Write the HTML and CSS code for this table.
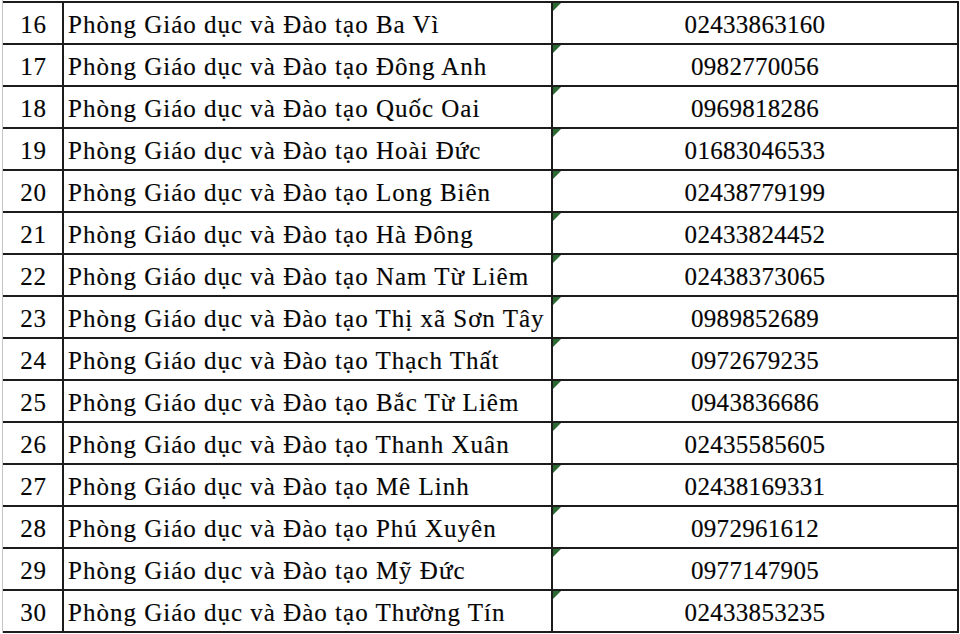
FILE: index.html
```html
<!DOCTYPE html>
<html lang="vi">
<head>
<meta charset="utf-8">
<title>Danh sách Phòng Giáo dục và Đào tạo</title>
<link rel="stylesheet" href="styles.css">
</head>
<body>
<div class="sheet">
  <div class="table">
    <div class="row"><div class="c no">16</div><div class="c name">Phòng Giáo dục và Đào tạo Ba Vì</div><div class="c tel">02433863160</div></div>
    <div class="row"><div class="c no">17</div><div class="c name">Phòng Giáo dục và Đào tạo Đông Anh</div><div class="c tel">0982770056</div></div>
    <div class="row"><div class="c no">18</div><div class="c name">Phòng Giáo dục và Đào tạo Quốc Oai</div><div class="c tel">0969818286</div></div>
    <div class="row"><div class="c no">19</div><div class="c name">Phòng Giáo dục và Đào tạo Hoài Đức</div><div class="c tel">01683046533</div></div>
    <div class="row"><div class="c no">20</div><div class="c name">Phòng Giáo dục và Đào tạo Long Biên</div><div class="c tel">02438779199</div></div>
    <div class="row"><div class="c no">21</div><div class="c name">Phòng Giáo dục và Đào tạo Hà Đông</div><div class="c tel">02433824452</div></div>
    <div class="row"><div class="c no">22</div><div class="c name">Phòng Giáo dục và Đào tạo Nam Từ Liêm</div><div class="c tel">02438373065</div></div>
    <div class="row"><div class="c no">23</div><div class="c name">Phòng Giáo dục và Đào tạo Thị xã Sơn Tây</div><div class="c tel">0989852689</div></div>
    <div class="row"><div class="c no">24</div><div class="c name">Phòng Giáo dục và Đào tạo Thạch Thất</div><div class="c tel">0972679235</div></div>
    <div class="row"><div class="c no">25</div><div class="c name">Phòng Giáo dục và Đào tạo Bắc Từ Liêm</div><div class="c tel">0943836686</div></div>
    <div class="row"><div class="c no">26</div><div class="c name">Phòng Giáo dục và Đào tạo Thanh Xuân</div><div class="c tel">02435585605</div></div>
    <div class="row"><div class="c no">27</div><div class="c name">Phòng Giáo dục và Đào tạo Mê Linh</div><div class="c tel">02438169331</div></div>
    <div class="row"><div class="c no">28</div><div class="c name">Phòng Giáo dục và Đào tạo Phú Xuyên</div><div class="c tel">0972961612</div></div>
    <div class="row"><div class="c no">29</div><div class="c name">Phòng Giáo dục và Đào tạo Mỹ Đức</div><div class="c tel">0977147905</div></div>
    <div class="row"><div class="c no">30</div><div class="c name">Phòng Giáo dục và Đào tạo Thường Tín</div><div class="c tel">02433853235</div></div>
  </div>
  <div class="grid-under"></div>
</div>
</body>
</html>
```
FILE: styles.css
```css
html, body {
  margin: 0;
  padding: 0;
  background: #ffffff;
}

body {
  width: 960px;
  height: 634px;
  overflow: hidden;
  font-family: "Liberation Serif", "Times New Roman", serif;
  color: #050505;
}

.sheet {
  margin-left: 2px;
  padding-top: 1px;
  border-left: 1px solid #c4c4c4;
  height: 633px;
  box-sizing: border-box;
}

.table {
  width: 956px;
  border-top: 2px solid #1c1c1c;
}

.row {
  display: grid;
  grid-template-columns: 61px 489px 406px;
  height: 42px;
  box-sizing: border-box;
  border-bottom: 2px solid #1c1c1c;
}

.c {
  position: relative;
  box-sizing: border-box;
  border-right: 2px solid #1c1c1c;
  font-size: 25px;
  line-height: 40px;
  padding-top: 2px;
  white-space: nowrap;
  overflow: hidden;
  -webkit-text-stroke: 0.15px #050505;
}

.no {
  text-align: center;
  letter-spacing: 0.8px;
  text-indent: 2px;
}

.name {
  padding-left: 4px;
  letter-spacing: 1px;
}

.tel {
  text-align: center;
  letter-spacing: 0.3px;
}

.tel::before {
  content: "";
  position: absolute;
  left: 0;
  top: 0;
  width: 0;
  height: 0;
  border-top: 8px solid #2d6a33;
  border-right: 8px solid transparent;
}

.grid-under {
  height: 1px;
  margin-top: 1px;
  width: 108px;
  background: #c4c4c4;
}
```
